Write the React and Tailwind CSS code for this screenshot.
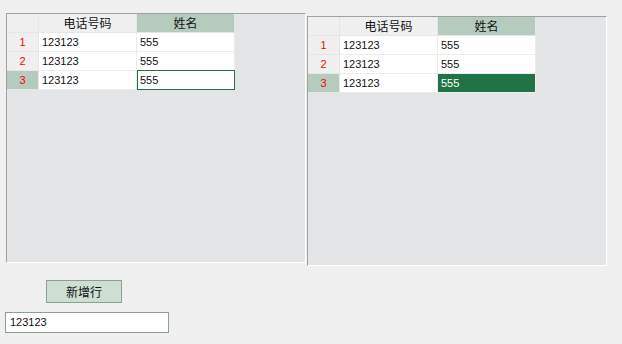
import React from "react";

const numFont = { fontFamily: '"Liberation Sans", Arial, sans-serif' };

function Grid({ variant }) {
  const rows = ["1", "2", "3"];
  return (
    <div className="w-[300px] h-[250px] border border-t-[#a0a0a0] border-l-[#a0a0a0] border-r-white border-b-white bg-[#e4e5e7] flex flex-col">
      <div className="flex">
        <div className="w-[32px] h-[19px] bg-[#f0f0f0] border-r border-b border-[#e6e6e6]" />
        <div className="w-[98px] h-[19px] bg-[#f0f0f0] border-r border-b border-[#e6e6e6] flex items-center justify-center text-[12px] text-[#111] font-['Noto_Sans_CJK_SC',sans-serif]">
          电话号码
        </div>
        <div className="w-[98px] h-[19px] bg-[#b4cbbd] border-r border-b border-[#e6e6e6] flex items-center justify-center text-[12px] text-[#111] font-['Noto_Sans_CJK_SC',sans-serif]">
          姓名
        </div>
      </div>
      {rows.map((r, i) => {
        const last = i === 2;
        return (
          <div className="flex" key={r}>
            <div
              className={
                "w-[32px] h-[19px] border-r border-b border-[#e6e6e6] flex items-center justify-center text-[11px] text-[#ff0000] " +
                (last ? "bg-[#b4cbbd]" : "bg-[#f0f0f0]")
              }
              style={numFont}
            >
              {r}
            </div>
            <div
              className="w-[98px] h-[19px] bg-white border-r border-b border-[#ececec] flex items-center pl-[3px] text-[11px] text-[#111]"
              style={numFont}
            >
              123123
            </div>
            {last && variant === "edit" ? (
              <div
                className="relative w-[98px] h-[19px] bg-white border-r border-b border-[#ececec] flex items-center pl-[3px] text-[11px] text-[#111]"
                style={numFont}
              >
                555
                <div className="absolute left-0 -top-px -right-px -bottom-px border border-[#217346]" />
              </div>
            ) : last ? (
              <div
                className="w-[98px] h-[19px] bg-[#217346] border-r border-b border-[#ececec] flex items-center pl-[3px] text-[11px] text-white"
                style={numFont}
              >
                555
              </div>
            ) : (
              <div
                className="w-[98px] h-[19px] bg-white border-r border-b border-[#ececec] flex items-center pl-[3px] text-[11px] text-[#111]"
                style={numFont}
              >
                555
              </div>
            )}
          </div>
        );
      })}
    </div>
  );
}

export default function App() {
  return (
    <div className="w-[622px] h-[344px] bg-[#f0f0f0] overflow-hidden flex flex-col items-start">
      <div className="flex items-start">
        <div className="mt-[13px] ml-[6px]">
          <Grid variant="edit" />
        </div>
        <div className="mt-[16px] ml-[1px]">
          <Grid variant="fill" />
        </div>
      </div>
      <button className="ml-[46px] mt-[14px] w-[76px] h-[23px] bg-[#cddfd2] border border-[#8ca08f] flex items-center justify-center text-[12px] text-[#111] font-['Noto_Sans_CJK_SC',sans-serif]">
        新增行
      </button>
      <div
        className="ml-[5px] mt-[9px] w-[164px] h-[21px] bg-white border border-[#8ca08f] flex items-center pl-[4px] text-[11px] text-[#111]"
        style={numFont}
      >
        123123
      </div>
    </div>
  );
}
